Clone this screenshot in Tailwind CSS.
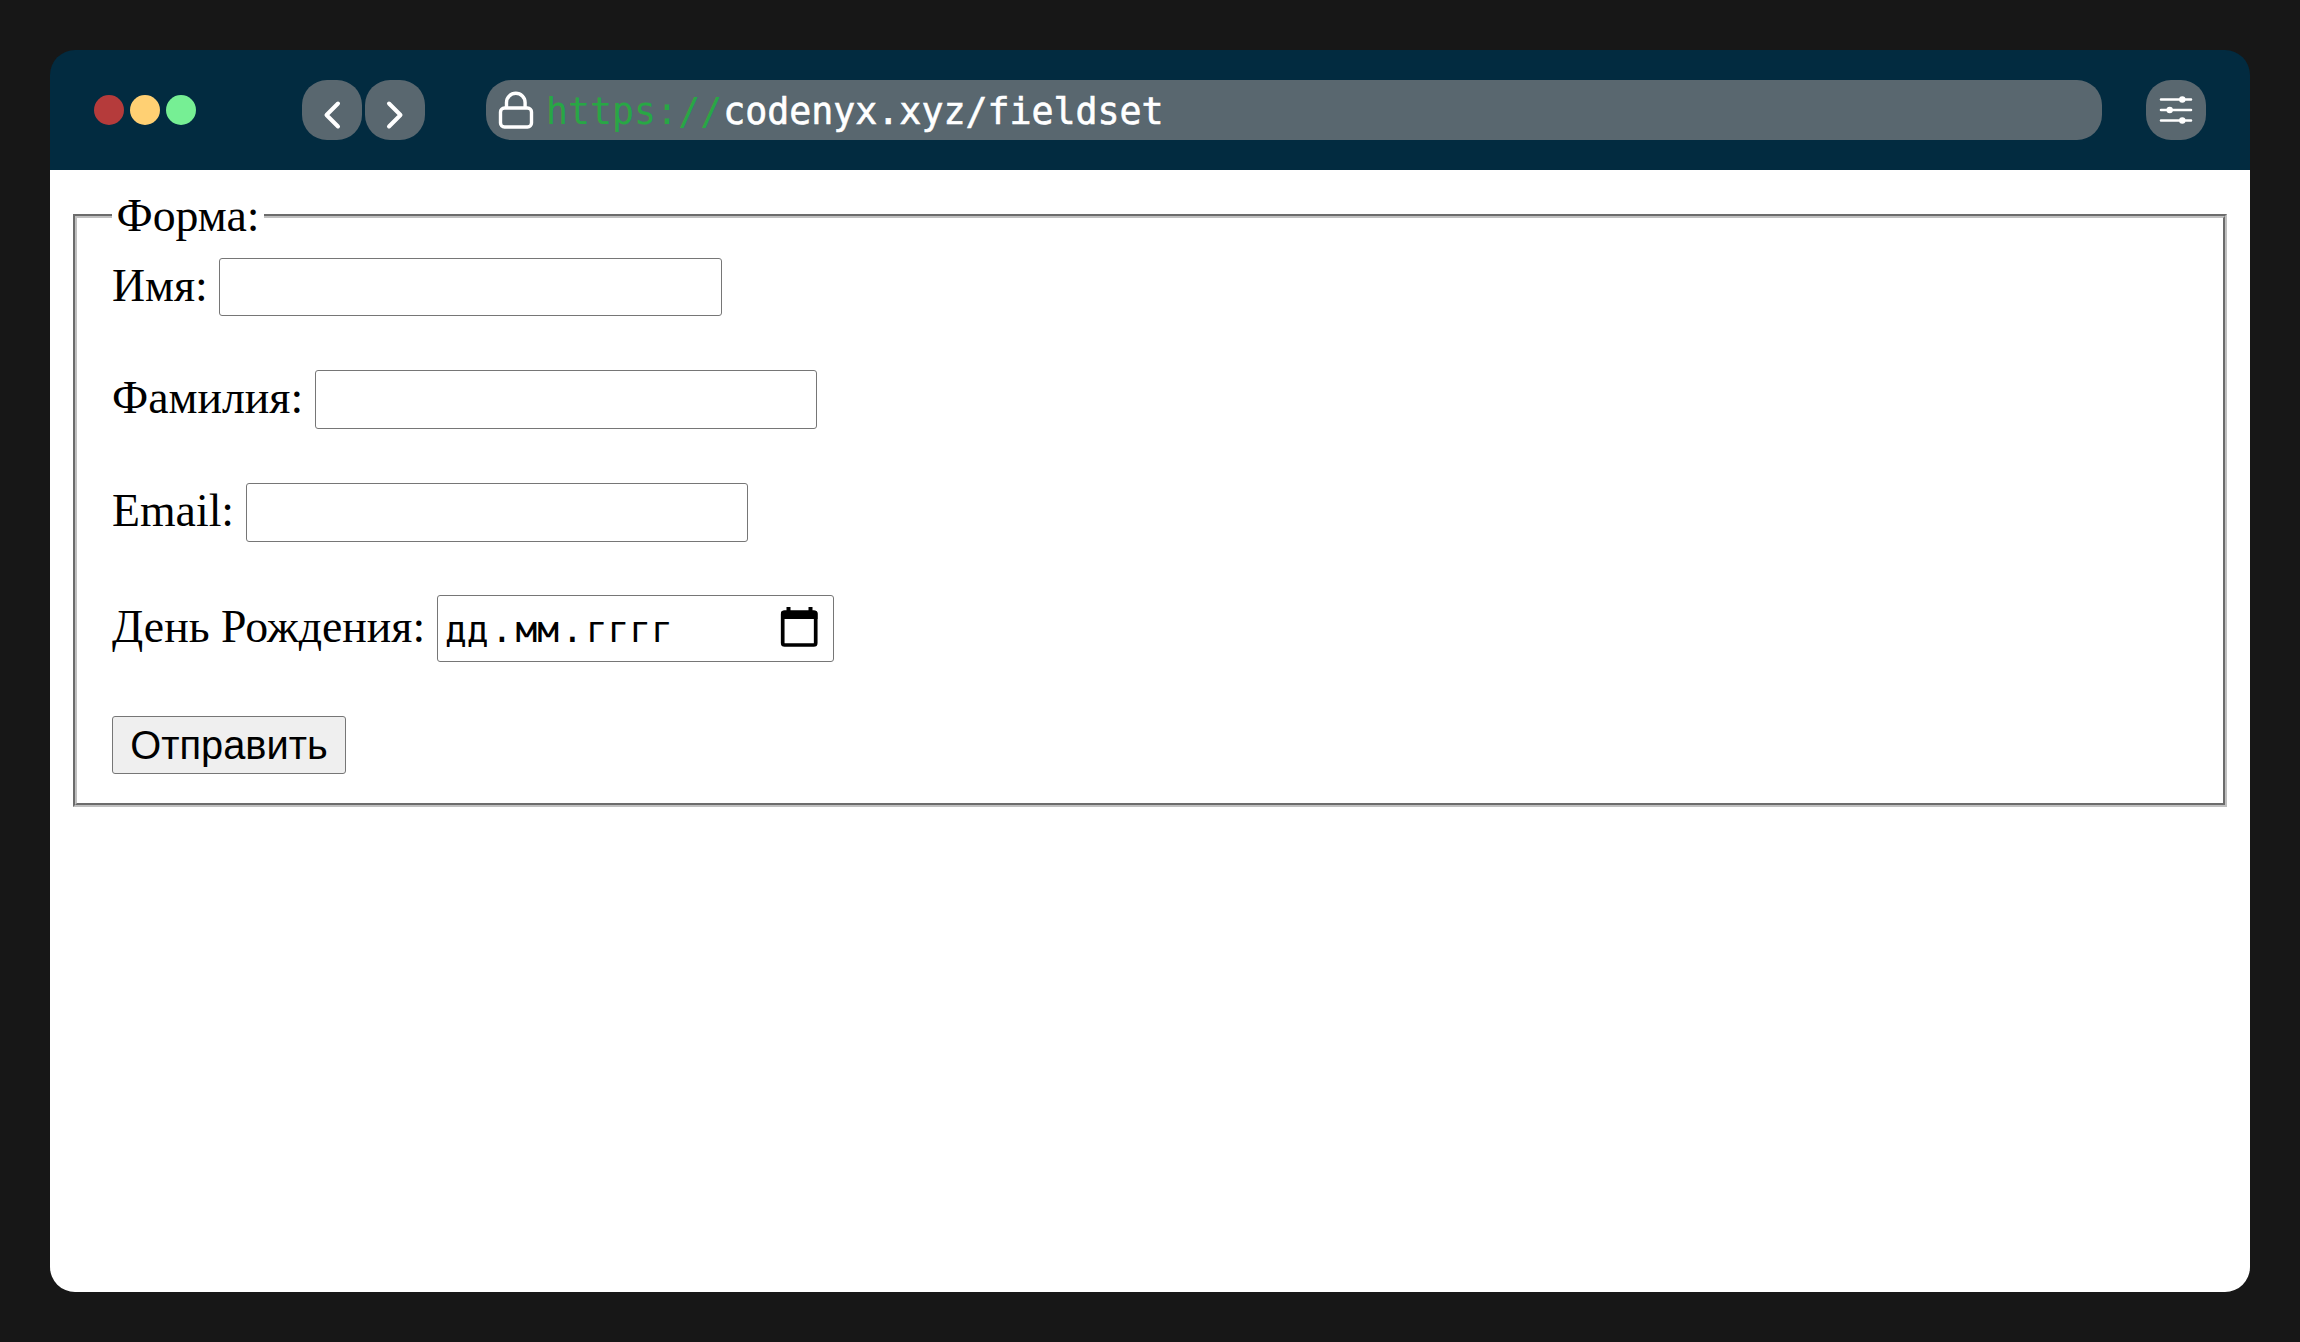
<!DOCTYPE html>
<html lang="ru">
<head>
<meta charset="utf-8">
<title>fieldset</title>
<script src="https://cdn.jsdelivr.net/npm/@tailwindcss/browser@4"></script>
</head>
<body class="bg-[#171717] w-[2300px] h-[1342px] p-[50px] overflow-hidden">
<div class="w-[2200px] h-[1242px] rounded-[25px] overflow-hidden flex flex-col">
  <header class="h-[120px] shrink-0 bg-[#022b40] flex items-center pl-11 pr-11">
    <div class="flex gap-1.5">
      <span class="size-[30px] rounded-full bg-[#b53b3b]"></span>
      <span class="size-[30px] rounded-full bg-[#ffd073]"></span>
      <span class="size-[30px] rounded-full bg-[#76ef94]"></span>
    </div>
    <nav class="flex gap-[3px] ml-[106px]">
      <span class="size-[60px] rounded-[25px] bg-[#59676f]"><svg class="size-[60px]" viewBox="0 0 60 60" fill="none" stroke="#fff" stroke-width="4" stroke-linecap="round" stroke-linejoin="round"><path d="M36 23.500 24.500 35 36 46.500"/></svg></span>
      <span class="size-[60px] rounded-[25px] bg-[#59676f]"><svg class="size-[60px]" viewBox="0 0 60 60" fill="none" stroke="#fff" stroke-width="4" stroke-linecap="round" stroke-linejoin="round"><path d="M24 23.500 35.500 35 24 46.500"/></svg></span>
    </nav>
    <div class="ml-[61px] w-[1616px] h-[60px] rounded-[25px] bg-[#59676f] flex items-center pl-3 font-['DejaVu_Sans_Mono',monospace] text-[36.600px] leading-[60px] text-white">
      <svg class="w-9 h-[60px] mr-3 shrink-0" viewBox="0 0 36 60" fill="none" stroke="#fff" stroke-width="3.400"><path d="M8.500 28V22.500a9.300 9.300 0 0 1 18.600 0V28"/><rect x="2.500" y="28" width="31" height="19" rx="4"/></svg>
      <span class="text-[#28a745] pt-[3px]">https://</span><span class="pt-[3px] pl-px [-webkit-text-stroke:0.6px_#fff]">codenyx.xyz/fieldset</span>
    </div>
    <span class="size-[60px] rounded-[25px] bg-[#59676f] ml-11"><svg class="size-[60px]" viewBox="0 0 60 60" stroke="#fff" stroke-width="2.600" stroke-linecap="round" fill="#fff"><path d="M15 19.500H45M15 30H45M15 40.500H45"/><g stroke="none"><circle cx="36.300" cy="19.500" r="3.200"/><circle cx="23.700" cy="30" r="3.200"/><circle cx="36.300" cy="40.500" r="3.200"/></g></svg></span>
  </header>
  <main class="flex-1 bg-white px-[23px] pt-[20px] font-['Liberation_Serif',serif] text-[45.800px] text-black">
    <fieldset class="h-[617px] border-4 border-[#c0c0c0] [border-style:groove] px-[35px]">
      <legend class="w-[152px] h-[52px] leading-[52px] px-[4.500px] whitespace-nowrap">Форма:</legend>
      <div class="flex flex-col gap-[54px] pt-[16px] leading-[58px]">
        <div class="flex h-[58px]"><label for="n" class="w-[107px] -mt-[1px] whitespace-nowrap">Имя:</label><input id="n" class="w-[503px] h-[58px] border border-[#767676] rounded-[3px]"></div>
        <div class="flex h-[59px]"><label for="f" class="w-[203px] -mt-[1px] whitespace-nowrap">Фамилия:</label><input id="f" class="w-[502px] h-[59px] border border-[#767676] rounded-[3px]"></div>
        <div class="flex h-[58px]"><label for="e" class="w-[134px] -mt-[1px] whitespace-nowrap">Email:</label><input id="e" class="w-[502px] h-[59px] border border-[#767676] rounded-[3px]"></div>
        <div class="flex h-[67px]"><label for="d" class="w-[325px] mt-[3px] whitespace-nowrap">День Рождения:</label>
          <div id="d" class="w-[397px] h-[67px] border border-[#767676] rounded-[3px] flex items-center justify-between pl-[7px] pr-[15px] font-['DejaVu_Sans_Mono',monospace] text-[36.200px] leading-[66px]"><span class="pt-[2px]">дд<span class="px-[2.500px]">.</span>мм<span class="px-[2.500px]">.</span>гггг</span><svg class="w-[38px] h-[42px] -mt-1" viewBox="0 0 38 42" fill="none" stroke="#000"><rect x="2.700" y="6" width="33" height="33" rx="2" stroke-width="3.700"/><path d="M1 7q0-2 2-2H35.500q2 0 2 2V13H1z" fill="#000" stroke="none"/><path d="M8.500 1V6M30.500 1V6" stroke-width="4"/></svg></div></div>
        <button class="w-[234px] h-[58px] border border-[#767676] rounded-[3px] bg-[#efefef] font-['Liberation_Sans',sans-serif] text-[39.800px] leading-[56px]">Отправить</button>
      </div>
    </fieldset>
  </main>
</div>
</body>
</html>
